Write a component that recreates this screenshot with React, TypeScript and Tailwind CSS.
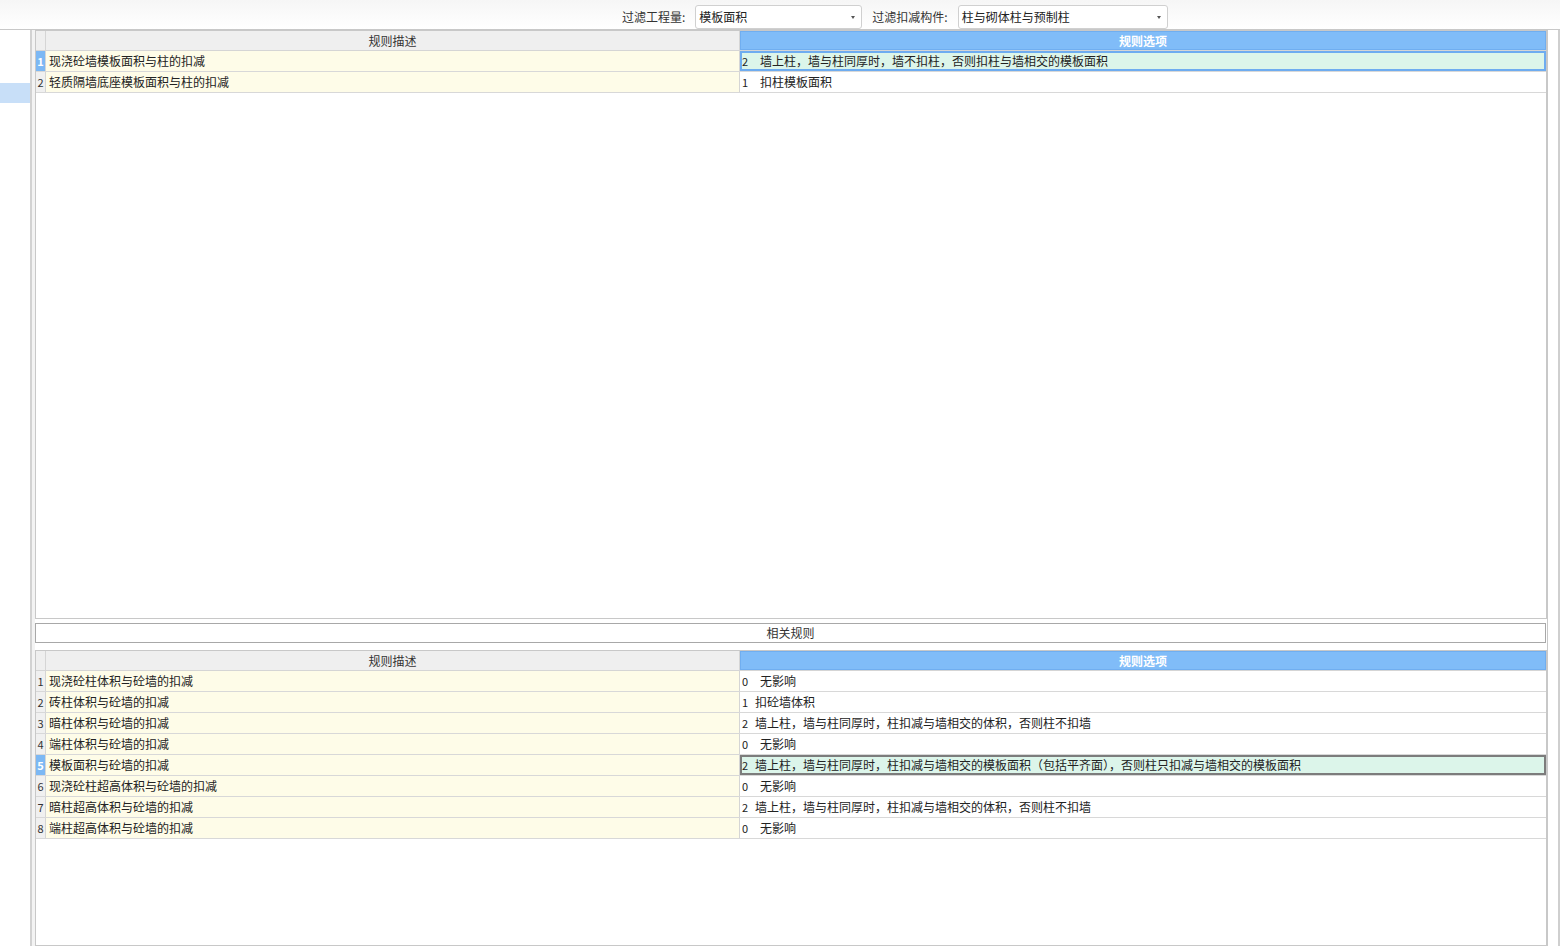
import React from 'react';

type Row = { desc: string; num: string; text: string; gap: number };

const topRows: Row[] = [
  { desc: '现浇砼墙模板面积与柱的扣减', num: '2', text: '墙上柱，墙与柱同厚时，墙不扣柱，否则扣柱与墙相交的模板面积', gap: 12 },
  { desc: '轻质隔墙底座模板面积与柱的扣减', num: '1', text: '扣柱模板面积', gap: 12 },
];

const relatedRows: Row[] = [
  { desc: '现浇砼柱体积与砼墙的扣减', num: '0', text: '无影响', gap: 12 },
  { desc: '砖柱体积与砼墙的扣减', num: '1', text: '扣砼墙体积', gap: 7 },
  { desc: '暗柱体积与砼墙的扣减', num: '2', text: '墙上柱，墙与柱同厚时，柱扣减与墙相交的体积，否则柱不扣墙', gap: 7 },
  { desc: '端柱体积与砼墙的扣减', num: '0', text: '无影响', gap: 12 },
  { desc: '模板面积与砼墙的扣减', num: '2', text: '墙上柱，墙与柱同厚时，柱扣减与墙相交的模板面积（包括平齐面），否则柱只扣减与墙相交的模板面积', gap: 7 },
  { desc: '现浇砼柱超高体积与砼墙的扣减', num: '0', text: '无影响', gap: 12 },
  { desc: '暗柱超高体积与砼墙的扣减', num: '2', text: '墙上柱，墙与柱同厚时，柱扣减与墙相交的体积，否则柱不扣墙', gap: 7 },
  { desc: '端柱超高体积与砼墙的扣减', num: '0', text: '无影响', gap: 12 },
];

const FilterSelect = ({ label, value, width }: { label: string; value: string; width: string }) => (
  <div className="flex items-center">
    <span className="text-[12px] text-[#333] mr-[10px]">{label}</span>
    <div className={`${width} h-[24px] flex items-center justify-between rounded-[3px] border border-[#d0d0d0] bg-white pl-[3px] pr-[6px]`}>
      <span className="text-[12px] text-[#222]">{value}</span>
      <span className="w-0 h-0 border-l-[2.5px] border-r-[2.5px] border-t-[3px] border-l-transparent border-r-transparent border-t-[#555]" />
    </div>
  </div>
);

const RuleGrid = ({
  rows,
  selected,
  selColor,
  fill,
}: {
  rows: Row[];
  selected: number;
  selColor: string;
  fill?: string;
}) => (
  <div className={`flex flex-col border border-[#c8c8c8] bg-white ${fill ?? ''}`}>
    {/* 헤더 */}
    <div className="flex h-[20px] border-b border-[#d5d5d5]">
      <div className="w-[10px] bg-[#efefef] border-r border-[#d5d5d5]" />
      <div className="w-[694px] bg-[#efefef] border-r border-[#d5d5d5] flex items-center justify-center text-[12px] text-[#333]">
        规则描述
      </div>
      <div className="flex-1 bg-[#80bcf8] border border-[#70aef0] flex items-center justify-center text-[12px] font-bold text-white">
        规则选项
      </div>
    </div>
    {rows.map((r, i) => {
      const sel = i === selected;
      return (
        <div key={i} className="flex h-[21px] border-b border-[#d8d8d8]">
          <div
            className={`w-[10px] border-r border-[#d5d5d5] flex items-center justify-center text-[11px] ${
              sel ? 'bg-[#7cb8f4] text-white font-bold' : 'bg-[#f0f0f0] text-[#333]'
            }`}
          >
            {i + 1}
          </div>
          <div className="w-[694px] bg-[#fefce8] border-r border-[#d5d5d5] flex items-center pl-[3px] text-[12px] text-[#222] whitespace-nowrap overflow-hidden">
            {r.desc}
          </div>
          <div
            className={`flex-1 flex items-center text-[12px] text-[#222] whitespace-nowrap overflow-hidden ${
              sel ? `bg-[#dcf5ea] border-2 ${selColor} pl-[0px]` : 'pl-[2px]'
            }`}
          >
            <span className="text-[11px] w-[6px]">{r.num}</span>
            <span style={{ marginLeft: r.gap }}>{r.text}</span>
          </div>
        </div>
      );
    })}
  </div>
);

export default function App() {
  return (
    <div
      className="w-[1560px] h-[946px] overflow-hidden flex flex-col bg-white"
      style={{ fontFamily: '"Noto Sans CJK SC", "Liberation Sans", sans-serif' }}
    >
      {/* 상단 필터 */}
      <div className="h-[30px] flex items-end pl-[622px] gap-[10px] bg-gradient-to-b from-[#f6f6f6] to-white border-b border-[#c8c8c8]">
        <FilterSelect label="过滤工程量:" value="模板面积" width="w-[167px]" />
        <FilterSelect label="过滤扣减构件:" value="柱与砌体柱与预制柱" width="w-[210px]" />
      </div>

      <div className="flex flex-1 min-h-0">
        {/* 좌측 패널 */}
        <div className="w-[30px] bg-white flex flex-col">
          <div className="h-[53px]" />
          <div className="h-[20px] bg-[#c8dff8]" />
        </div>
        <div className="w-[2px] bg-[#d2d2d2]" />
        <div className="w-[3px] bg-[#f3f3f3]" />

        {/* 본문 */}
        <div className="flex-1 flex flex-col min-w-0">
          <RuleGrid rows={topRows} selected={0} selColor="border-[#6eacf0]" fill="h-[589px]" />
          <div className="h-[20px] mt-[4px] mr-[1px] border border-[#a8a8a8] bg-white flex items-center justify-center text-[12px] text-[#333]">
            相关规则
          </div>
          <div className="h-[7px]" />
          <RuleGrid rows={relatedRows} selected={4} selColor="border-[#7c7c7c]" fill="flex-1" />
        </div>

        {/* 우측 스크롤 영역 */}
        <div className="w-[1px] bg-[#c8c8c8]" />
        <div className="w-[10px] bg-white" />
        <div className="w-[2px] bg-[#cfcfcf]" />
      </div>
    </div>
  );
}
